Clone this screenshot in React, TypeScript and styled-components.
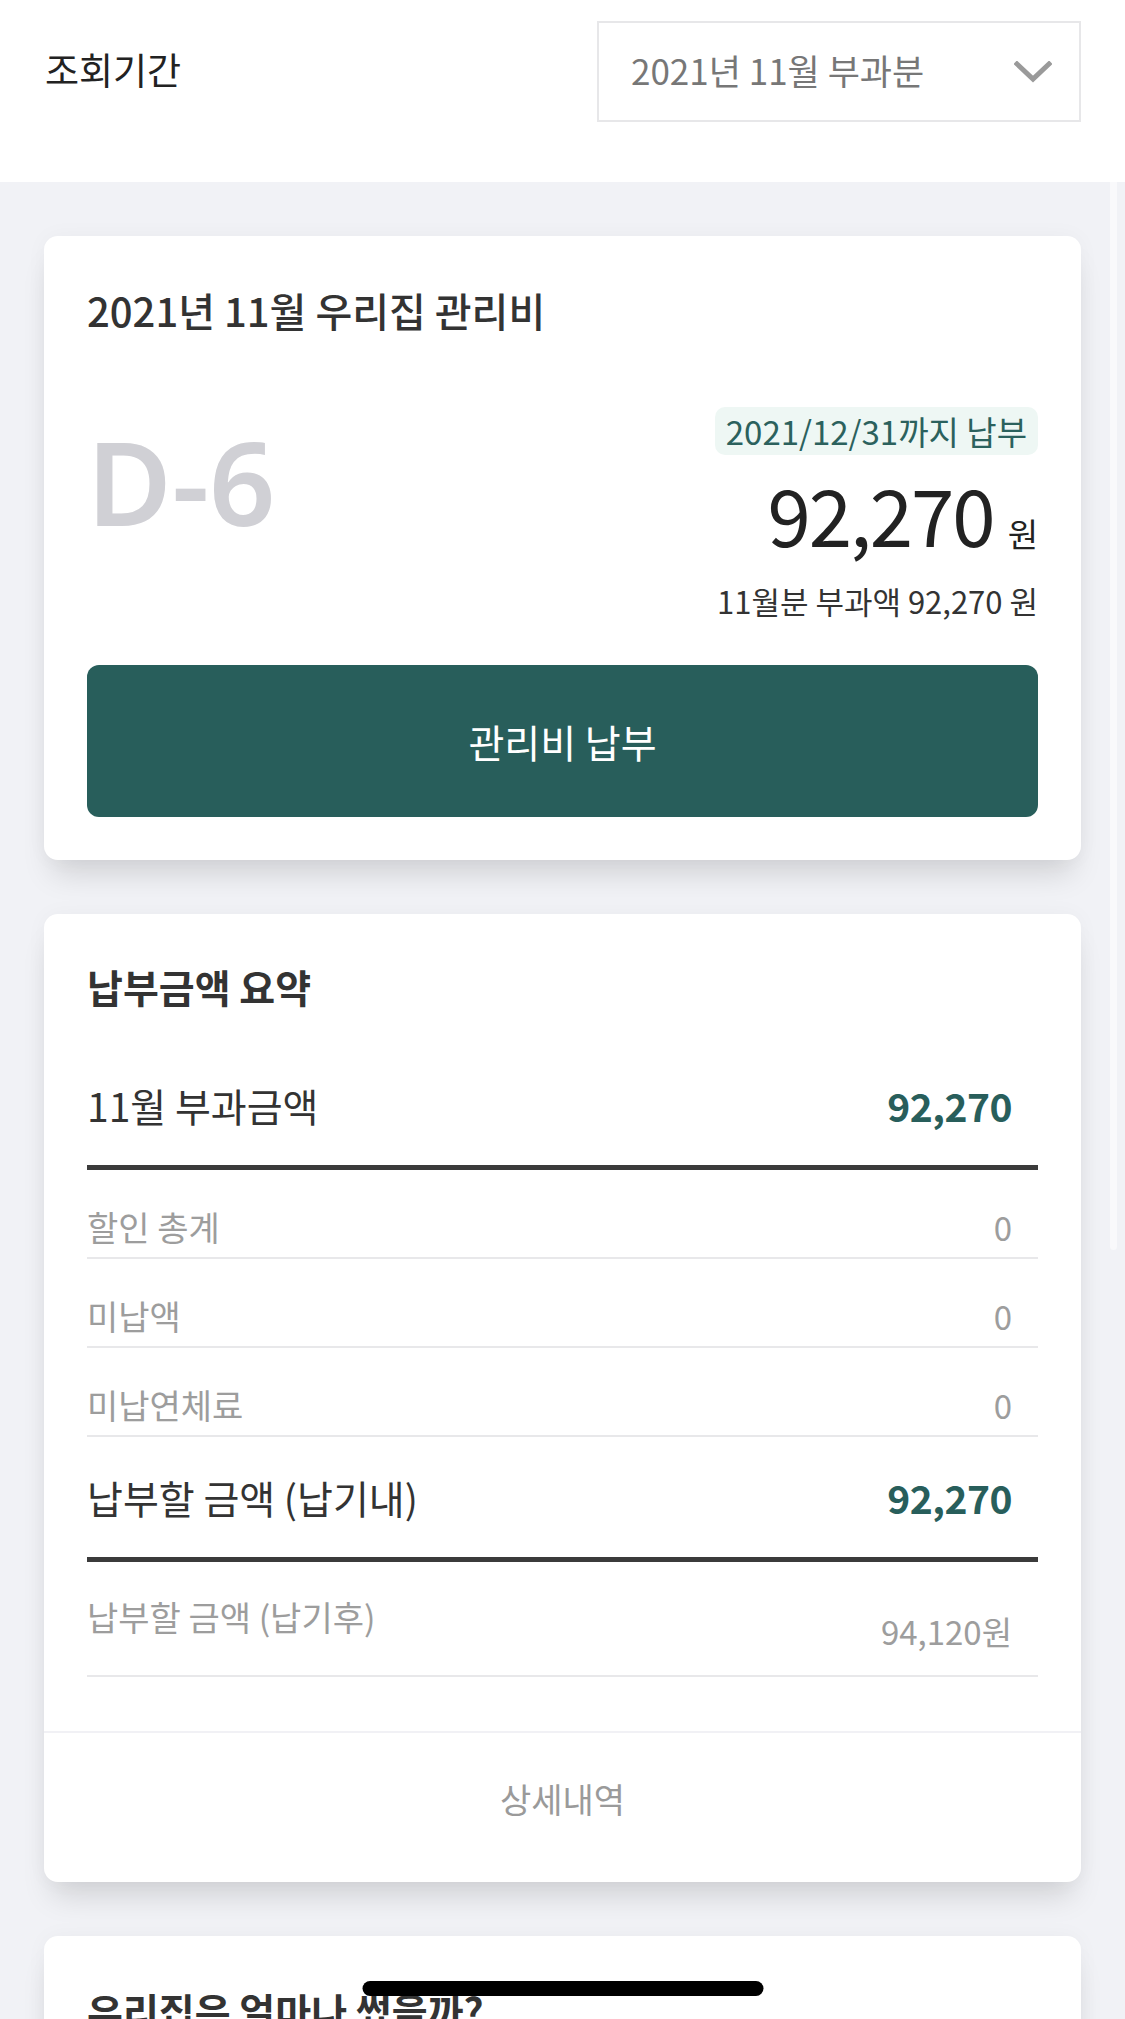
import React from "react";
import styled, { createGlobalStyle } from "styled-components";

const GlobalStyle = createGlobalStyle`
  * { box-sizing: border-box; }
  html, body {
    margin: 0;
    padding: 0;
    background: #f1f2f6;
    font-family: "Noto Sans CJK KR", "Noto Sans", sans-serif;
    color: #222;
  }
`;

const Page = styled.div`
  width: 1125px;
  min-height: 2019px;
  background: #f1f2f6;
  position: relative;
  overflow: hidden;
`;

const Header = styled.header`
  height: 182px;
  background: #fff;
  display: flex;
  justify-content: space-between;
  align-items: flex-start;
  padding: 21px 44px 0 45px;
`;

const HeaderLabel = styled.div`
  font-size: 37px;
  line-height: 96px;
  color: #222;
`;

const Select = styled.div`
  width: 484px;
  height: 101px;
  border: 2px solid #e7e7e9;
  display: flex;
  align-items: center;
  justify-content: space-between;
  padding: 0 27px 4px 32px;
  font-size: 35px;
  color: #777;
`;

const ChevronBox = styled.span`
  display: flex;
  padding-top: 4px;
`;

const Main = styled.main`
  display: flex;
  flex-direction: column;
  gap: 54px;
  padding: 54px 44px 0;
`;

const Card = styled.section`
  background: #fff;
  border-radius: 14px;
  box-shadow: 0 22px 30px -8px rgba(0, 0, 0, 0.13), 0 0 22px rgba(0, 0, 0, 0.035);
`;

const BillCard = styled(Card)`
  padding: 51px 43px 43px;
`;

const BillTitle = styled.h2`
  margin: 0;
  font-size: 40px;
  line-height: 46px;
  font-weight: 500;
  color: #333;
`;

const BillBody = styled.div`
  display: flex;
  justify-content: space-between;
  align-items: flex-start;
  margin-top: 74px;
`;

const DDay = styled.div`
  font-family: "Noto Sans", "Noto Sans CJK KR", sans-serif;
  font-size: 116px;
  line-height: 110px;
  font-weight: 600;
  color: #d0d0d5;
  margin-top: 19px;
`;

const AmountColumn = styled.div`
  display: flex;
  flex-direction: column;
  align-items: flex-end;
`;

const DueBadge = styled.div`
  height: 48px;
  padding: 0 11px;
  border-radius: 10px;
  background: #eef7f4;
  color: #2b615d;
  font-size: 33px;
  line-height: 48px;
`;

const AmountLine = styled.div`
  display: flex;
  align-items: baseline;
  gap: 14px;
  margin-top: 19px;
`;

const AmountValue = styled.span`
  font-size: 78px;
  line-height: 78px;
  color: #222;
  letter-spacing: -2px;
`;

const Won = styled.span`
  font-size: 33px;
  color: #222;
`;

const SubAmount = styled.div`
  margin-top: 24px;
  font-size: 31px;
  line-height: 40px;
  color: #333;
`;

const PayButton = styled.button`
  display: block;
  width: 100%;
  height: 152px;
  margin-top: 44px;
  border: none;
  border-radius: 12px;
  background: #285e5b;
  color: #fff;
  font-family: inherit;
  font-size: 39px;
`;

const SummaryCard = styled(Card)`
  overflow: hidden;
`;

const SummaryBody = styled.div`
  padding: 48px 43px 54px;
`;

const SectionTitle = styled.h2`
  margin: 0 0 35px;
  font-size: 39px;
  line-height: 48px;
  font-weight: 700;
  color: #333;
`;

const BigRow = styled.div`
  height: 125px;
  display: flex;
  align-items: center;
  justify-content: space-between;
  padding-right: 26px;
  border-bottom: 5px solid #3b3b3b;
`;

const BigLabel = styled.span`
  font-size: 39px;
  color: #333;
`;

const BigValue = styled.span`
  font-size: 39px;
  font-weight: 700;
  color: #285e5b;
  letter-spacing: -0.5px;
`;

const SmallRow = styled.div<{ $tall?: boolean }>`
  height: ${(p) => (p.$tall ? 115 : 89)}px;
  display: flex;
  justify-content: space-between;
  align-items: flex-start;
  padding: ${(p) => (p.$tall ? 35 : 37)}px 26px 0 0;
  border-bottom: 2px solid #e8e8ea;
`;

const SmallLabel = styled.span`
  font-size: 34px;
  line-height: 40px;
  color: #9d9d9d;
`;

const SmallValue = styled.span<{ $offset?: number }>`
  font-size: 33px;
  line-height: 40px;
  color: #9d9d9d;
  margin-top: ${(p) => p.$offset ?? 0}px;
`;

const DetailLink = styled.div`
  border-top: 2px solid #f1f1f5;
  padding: 46px 0 63px;
  text-align: center;
  font-size: 34px;
  line-height: 40px;
  color: #9a9a9a;
`;

const UsageCard = styled(Card)`
  padding: 50px 43px 200px;
`;

const ScrollIndicator = styled.div`
  position: absolute;
  top: 182px;
  right: 8px;
  width: 7px;
  height: 1068px;
  border-radius: 0 0 4px 4px;
  background: rgba(255, 255, 255, 0.55);
`;

const HomeIndicator = styled.div`
  position: fixed;
  left: 50%;
  bottom: 23px;
  transform: translateX(-50%);
  width: 401px;
  height: 15px;
  border-radius: 8px;
  background: #000;
`;

const Chevron = () => (
  <svg width="38" height="22" viewBox="0 0 38 22" fill="none">
    <path d="M3 3 L19 18 L35 3" stroke="#9a9a9a" strokeWidth="5" strokeLinecap="square" />
  </svg>
);

const smallRows = [
  { label: "할인 총계", value: "0" },
  { label: "미납액", value: "0" },
  { label: "미납연체료", value: "0" },
];

export default function App() {
  return (
    <>
      <GlobalStyle />
      <Page>
        <Header>
          <HeaderLabel>조회기간</HeaderLabel>
          <Select>
            <span>2021년 11월 부과분</span>
            <ChevronBox>
              <Chevron />
            </ChevronBox>
          </Select>
        </Header>
        <Main>
          <BillCard>
            <BillTitle>2021년 11월 우리집 관리비</BillTitle>
            <BillBody>
              <DDay>D-6</DDay>
              <AmountColumn>
                <DueBadge>2021/12/31까지 납부</DueBadge>
                <AmountLine>
                  <AmountValue>92,270</AmountValue>
                  <Won>원</Won>
                </AmountLine>
                <SubAmount>11월분 부과액 92,270 원</SubAmount>
              </AmountColumn>
            </BillBody>
            <PayButton>관리비 납부</PayButton>
          </BillCard>
          <SummaryCard>
            <SummaryBody>
              <SectionTitle>납부금액 요약</SectionTitle>
              <BigRow>
                <BigLabel>11월 부과금액</BigLabel>
                <BigValue>92,270</BigValue>
              </BigRow>
              {smallRows.map((r) => (
                <SmallRow key={r.label}>
                  <SmallLabel>{r.label}</SmallLabel>
                  <SmallValue>{r.value}</SmallValue>
                </SmallRow>
              ))}
              <BigRow>
                <BigLabel>납부할 금액 (납기내)</BigLabel>
                <BigValue>92,270</BigValue>
              </BigRow>
              <SmallRow $tall>
                <SmallLabel>납부할 금액 (납기후)</SmallLabel>
                <SmallValue $offset={14}>94,120원</SmallValue>
              </SmallRow>
            </SummaryBody>
            <DetailLink>상세내역</DetailLink>
          </SummaryCard>
          <UsageCard>
            <SectionTitle>우리집은 얼마나 썼을까?</SectionTitle>
          </UsageCard>
        </Main>
        <ScrollIndicator />
        <HomeIndicator />
      </Page>
    </>
  );
}
